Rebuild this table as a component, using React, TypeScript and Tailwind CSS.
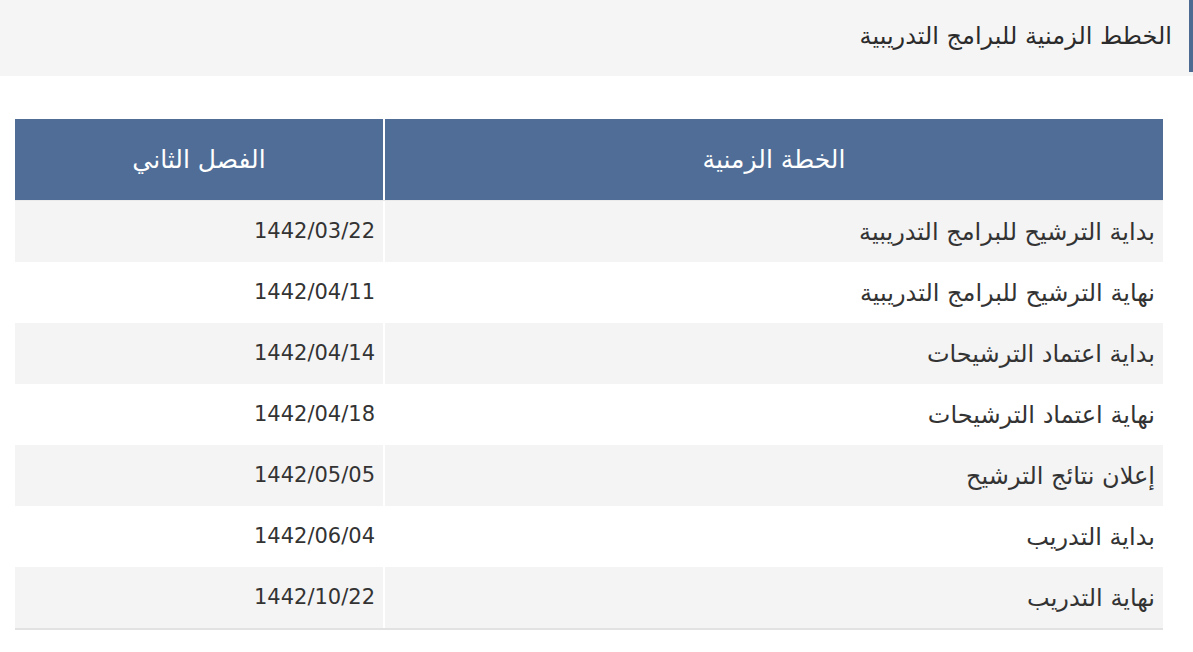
const rows = [
  { label: "بداية الترشيح للبرامج التدريبية", date: "1442/03/22" },
  { label: "نهاية الترشيح للبرامج التدريبية", date: "1442/04/11" },
  { label: "بداية اعتماد الترشيحات", date: "1442/04/14" },
  { label: "نهاية اعتماد الترشيحات", date: "1442/04/18" },
  { label: "إعلان نتائج الترشيح", date: "1442/05/05" },
  { label: "بداية التدريب", date: "1442/06/04" },
  { label: "نهاية التدريب", date: "1442/10/22" },
];

export default function App() {
  return (
    <div
      dir="rtl"
      className="w-[1193px] h-[652px] bg-white text-[#333] overflow-hidden"
      style={{ fontFamily: '"DejaVu Sans", "Noto Sans", sans-serif' }}
    >
      {/* title bar */}
      <div className="h-[76px] bg-[#f5f5f5] flex items-start">
        <div className="h-[72px] w-[4px] bg-[#4d6a92]"></div>
        <h2 className="h-[72px] flex items-center pr-[17px] text-[24px] text-[#2b2b2b]">
          الخطط الزمنية للبرامج التدريبية
        </h2>
      </div>

      {/* table */}
      <div className="mt-[43px] mr-[30px] w-[1148px] border-b-2 border-[#e2e2e2]">
        <div className="flex h-[82px] gap-[2px] border-b border-[#eaeaea]">
          <div className="flex-1 bg-[#4f6d96] text-white text-[25px] flex items-center justify-center">
            الخطة الزمنية
          </div>
          <div className="w-[368px] bg-[#4f6d96] text-white text-[25px] flex items-center justify-center">
            الفصل الثاني
          </div>
        </div>
        {rows.map((r, i) => (
          <div key={r.date} className="flex h-[61px] gap-[2px] bg-white">
            <div
              className={`flex-1 flex items-center pr-[8px] text-[24px] ${
                i % 2 === 0 ? "bg-[#f4f4f4]" : "bg-white"
              }`}
            >
              {r.label}
            </div>
            <div
              className={`w-[368px] flex items-center pr-[8px] text-[21px] ${
                i % 2 === 0 ? "bg-[#f4f4f4]" : "bg-white"
              }`}
            >
              {r.date}
            </div>
          </div>
        ))}
      </div>
    </div>
  );
}
